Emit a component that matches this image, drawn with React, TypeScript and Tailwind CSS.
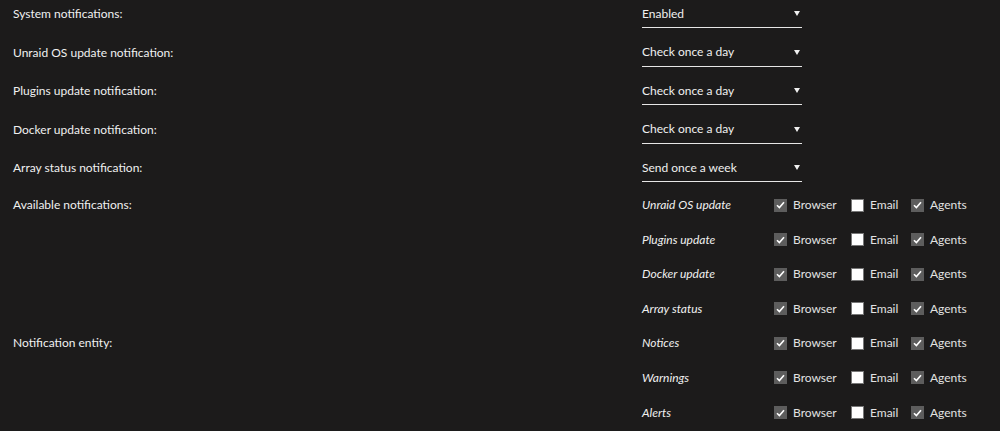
import React from 'react';

const selects = [
  { label: 'System notifications:', value: 'Enabled' },
  { label: 'Unraid OS update notification:', value: 'Check once a day' },
  { label: 'Plugins update notification:', value: 'Check once a day' },
  { label: 'Docker update notification:', value: 'Check once a day' },
  { label: 'Array status notification:', value: 'Send once a week' },
];

const groups = [
  { label: 'Available notifications:', items: ['Unraid OS update', 'Plugins update', 'Docker update', 'Array status'] },
  { label: 'Notification entity:', items: ['Notices', 'Warnings', 'Alerts'] },
];

function Box({ checked }: { checked: boolean }) {
  if (checked) {
    return (
      <span className="w-[13px] h-[13px] bg-[#5d5d5d] flex items-center justify-center shrink-0">
        <svg width="9" height="8" viewBox="0 0 9 8">
          <path d="M1 4.2 L3.4 6.6 L8 1.2" stroke="#ffffff" strokeWidth="1.6" fill="none" />
        </svg>
      </span>
    );
  }
  return <span className="w-[13px] h-[13px] bg-white border border-[#777] shrink-0" />;
}

function Check({ checked, label, width }: { checked: boolean; label: string; width: string }) {
  return (
    <label className={`flex items-center gap-[6px] ${width}`}>
      <Box checked={checked} />
      <span className="text-[#e2e2e2]">{label}</span>
    </label>
  );
}

export default function App() {
  return (
    <div
      className="w-[1000px] h-[431px] bg-[#1c1b1b] text-[#f0f0f0] text-[12px] overflow-hidden"
      style={{ fontFamily: 'Lato, "Open Sans", sans-serif' }}
    >
      {selects.map((s) => (
        <div key={s.label} className="flex h-[38.5px]">
          <div className="w-[642px] pl-[13px] h-[28px] flex items-center">{s.label}</div>
          <div className="w-[160px] h-[28px] flex items-center justify-between border-b border-[#e6e6e6]">
            <span>{s.value}</span>
            <svg width="6" height="5" viewBox="0 0 6 5" className="mr-[2px]">
              <path d="M0 0 H6 L3 5 Z" fill="#f0f0f0" />
            </svg>
          </div>
        </div>
      ))}
      {groups.map((g) => (
        <div key={g.label} className="flex">
          <div className="w-[642px] pl-[13px] h-[25px] flex items-center">{g.label}</div>
          <div className="flex flex-col">
            {g.items.map((it) => (
              <div key={it} className="flex items-start h-[34.6px]">
                <div className="w-[132px] h-[25px] flex items-center italic">{it}</div>
                <div className="flex h-[25px] items-center">
                  <Check checked label="Browser" width="w-[77px]" />
                  <Check checked={false} label="Email" width="w-[60px]" />
                  <Check checked label="Agents" width="w-[70px]" />
                </div>
              </div>
            ))}
          </div>
        </div>
      ))}
    </div>
  );
}
